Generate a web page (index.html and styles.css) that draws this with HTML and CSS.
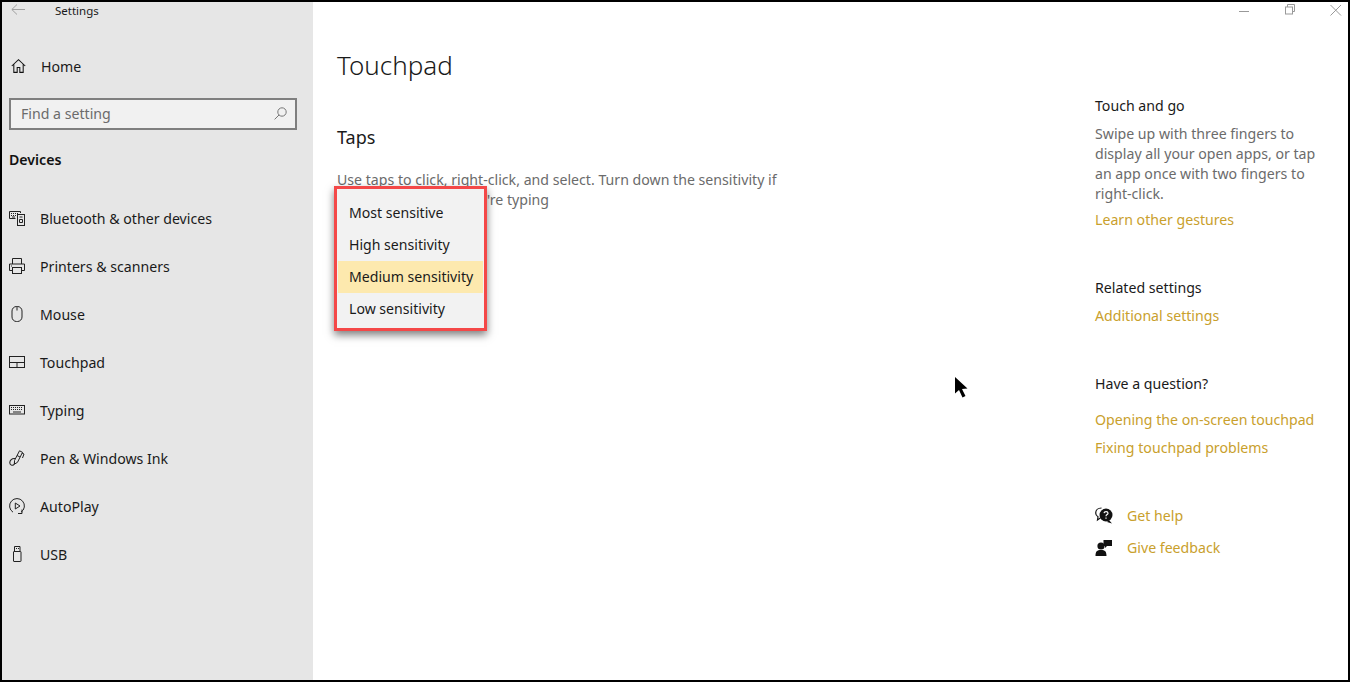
FILE: index.html
```html
<!DOCTYPE html>
<html lang="en">
<head>
    <meta charset="UTF-8">
    <title>Settings</title>
    <link rel="stylesheet" href="styles.css">
</head>
<body>
    <div class="window">
        <div class="sidebar">
            <div class="titlebar">
                <svg class="back" width="14" height="12" viewBox="0 0 14 12"><path d="M6 .5.8 5.500 6 10.500M1 5.500h13" fill="none" stroke="#a0a0a0"/></svg>
                <span>Settings</span>
            </div>
            <a class="home">
                <svg width="15" height="16" viewBox="0 0 16 16"><path d="M.8 8 8 1.200 15.200 8M3 6.200v8.600h3.600V9.600h2.800v5.200H13V6.200" fill="none" stroke="#111" stroke-width="1.100"/></svg>
                <span>Home</span>
            </a>
            <div class="search">
                <span>Find a setting</span>
                <svg width="13" height="13" viewBox="0 0 13 13"><circle cx="8" cy="5" r="4.200" fill="none" stroke="#777"/><path d="M5 8 .6 12.400" stroke="#777"/></svg>
            </div>
            <h2 class="group">Devices</h2>
            <ul class="nav">
                <li>
                    <svg width="16" height="16" viewBox="0 0 16 16" fill="none" stroke="#222"><path d="M.5 1.500h11v1.500M.5 1.500v7h6"/><path d="M2 3.500h1M4 3.500h1M6 3.500h1M8 3.500h1M2 5.500h1M4 5.500h1M6 5.500h1M3 7h3"/><rect x="8.500" y="4.500" width="7" height="11"/><path d="M10.500 7h3M10.500 9.500h3v3h-3z"/></svg>
                    <span>Bluetooth &amp; other devices</span>
                </li>
                <li>
                    <svg width="16" height="16" viewBox="0 0 16 16" fill="none" stroke="#222"><path d="M3.500 6V.5h9V6M3.500 12.500h-3V6h15v6.500h-3"/><rect x="3.500" y="9.500" width="9" height="6"/><path d="M2 8h1"/></svg>
                    <span>Printers &amp; scanners</span>
                </li>
                <li>
                    <svg width="16" height="16" viewBox="0 0 16 16" fill="none" stroke="#222"><rect x="3" y=".5" width="10" height="15" rx="4.500"/><path d="M8 .5v4"/></svg>
                    <span>Mouse</span>
                </li>
                <li>
                    <svg width="16" height="16" viewBox="0 0 16 16" fill="none" stroke="#222"><rect x=".5" y="2.500" width="15" height="11"/><path d="M.5 8.500h15M8 8.500v5"/></svg>
                    <span>Touchpad</span>
                </li>
                <li>
                    <svg width="16" height="16" viewBox="0 0 16 16" fill="none" stroke="#222"><rect x=".5" y="3.500" width="15" height="8.500"/><path d="M2 5.500h12M2 7.500h12" stroke-dasharray="1 1"/><path d="M4 10h8"/></svg>
                    <span>Typing</span>
                </li>
                <li>
                    <svg width="16" height="16" viewBox="0 0 16 16" fill="none" stroke="#222"><path d="M5.500 10.500 10.500.8l3 1.500-5 10-3 1.800zM8 5.500l3 1.500M13 3l2 1-1.500 4"/><path d="M6 8.500C3 8 .6 10.500.8 13c.2 2.600 3.500 3 4.500 1 .4-.8.2-1.500 0-2" stroke-width="1.100"/></svg>
                    <span>Pen &amp; Windows Ink</span>
                </li>
                <li>
                    <svg width="16" height="16" viewBox="0 0 16 16" fill="none" stroke="#222"><path d="M4 14.200A7.400 7.400 0 1 1 12 14.200"/><path d="M6.300 5v6l4.700-3zM13 11.500v4h-4"/></svg>
                    <span>AutoPlay</span>
                </li>
                <li>
                    <svg width="16" height="16" viewBox="0 0 16 16" fill="none" stroke="#222"><rect x="4.500" y="5.500" width="7.500" height="10" rx=".5"/><path d="M5.500 5.500V.5h5.500v5M7 2.500h1M9 2.500h1"/></svg>
                    <span>USB</span>
                </li>
            </ul>
        </div>

        <div class="main">
            <div class="controls">
                <svg width="16" height="16" viewBox="0 0 16 16"><path d="M3 9.500h10" stroke="#999"/></svg>
                <svg width="16" height="16" viewBox="0 0 16 16" fill="none" stroke="#999"><rect x="3.500" y="5" width="7" height="7"/><path d="M5.500 5V2.500h7v7H10.500"/></svg>
                <svg width="16" height="16" viewBox="0 0 16 16"><path d="M2.500 3 13 13.500M13 3 2.500 13.500" stroke="#999"/></svg>
            </div>
            <div class="columns">
                <div class="content">
                    <h1>Touchpad</h1>
                    <h2 class="section">Taps</h2>
                    <div class="taps">
                        <p>Use taps to click, right-click, and select. Turn down the sensitivity if taps happen while you're typing</p>
                        <ul class="menu">
                            <li>Most sensitive</li>
                            <li>High sensitivity</li>
                            <li class="selected">Medium sensitivity</li>
                            <li>Low sensitivity</li>
                        </ul>
                    </div>
                </div>
                <div class="aside">
                    <h3>Touch and go</h3>
                    <p>Swipe up with three fingers to display all your open apps, or tap an app once with two fingers to right-click.</p>
                    <a class="link first">Learn other gestures</a>

                    <h3 class="related">Related settings</h3>
                    <a class="link additional">Additional settings</a>

                    <h3 class="question">Have a question?</h3>
                    <a class="link opening">Opening the on-screen touchpad</a>
                    <a class="link fixing">Fixing touchpad problems</a>

                    <div class="help">
                        <svg width="18" height="17" viewBox="0 0 18 17"><path d="M6.500 1C3 1 .7 3.300.7 6c0 1.700.9 3 2.300 3.800L2.500 13 6 10.500" fill="none" stroke="#111" stroke-width="1.200"/><circle cx="11" cy="8" r="6.500" fill="#111"/><path d="M14 13l3 3.500-5-1.500z" fill="#111"/><path d="M9 6.200c.3-2 4-2 4 0 0 1.400-2 1.300-2 3" fill="none" stroke="#fff" stroke-width="1.200"/><path d="M10.400 10.500h1.200v1.300h-1.200z" fill="#fff"/></svg>
                        <a class="link">Get help</a>
                    </div>
                    <div class="help">
                        <svg width="18" height="17" viewBox="0 0 18 17" fill="#111"><circle cx="6" cy="7" r="3.600"/><path d="M.5 17c0-4.500 1.500-6 5.500-6s5.500 1.500 5.500 6zM8.500 1h8.500v6H12l-2 2V7H8.500z"/></svg>
                        <a class="link">Give feedback</a>
                    </div>
                </div>
            </div>
        </div>
    </div>

    <svg class="cursor" width="13" height="21" viewBox="0 0 13 21"><path d="M0 0v16.500l4-3.500 3.500 7.500 3-1.500L7 12l5.500-.5z" fill="#000"/></svg>
</body>
</html>
```

FILE: styles.css
```css
* {
    margin: 0;
    padding: 0;
    box-sizing: border-box;
    font-family: "Noto Sans", "Open Sans", sans-serif;
}

body {
    height: 682px;
    overflow: hidden;
    background: #fff;
    position: relative;
}

.window {
    display: flex;
    height: 682px;
    border: 2px solid #000;
}

/* left column */
.sidebar {
    width: 311px;
    flex-shrink: 0;
    background: #e6e6e6;
    color: #1a1a1a;
    font-size: 14.15px;
}

.titlebar {
    display: flex;
    align-items: center;
    height: 16px;
    padding-left: 9px;
    font-size: 11.5px;
}

.titlebar span {
    margin-left: 30px;
}

.home {
    display: flex;
    align-items: center;
    gap: 15px;
    height: 48px;
    margin-top: 24px;
    padding-left: 9px;
}

.search {
    display: flex;
    align-items: center;
    justify-content: space-between;
    width: 288px;
    height: 32px;
    margin: 8px 0 0 7px;
    padding: 0 8px 2px 10px;
    background: #f1f1f1;
    border: 2px solid #7f7f7f;
    color: #6b6b6b;
}

.group {
    margin: 20px 0 0 7px;
    height: 20px;
    line-height: 20px;
    font-size: 14.15px;
    font-weight: 600;
    color: #111;
}

.nav {
    list-style: none;
    margin-top: 24px;
}

.nav li {
    display: flex;
    align-items: center;
    gap: 15px;
    height: 48px;
    padding-left: 7px;
}

/* page */
.main {
    flex: 1;
    min-width: 0;
}

.controls {
    display: flex;
    justify-content: flex-end;
    gap: 30px;
    height: 18px;
    padding-right: 4px;
}

.columns {
    display: flex;
}

.content {
    width: 782px;
    padding-left: 24px;
}

.content h1 {
    margin-top: 25px;
    height: 40px;
    line-height: 40px;
    font-size: 26px;
    font-weight: 300;
    color: #1a1a1a;
}

.section {
    margin-top: 38px;
    height: 28px;
    line-height: 28px;
    font-size: 18px;
    font-weight: 400;
    color: #1a1a1a;
}

.taps {
    position: relative;
    margin-top: 19px;
    width: 450px;
}

.taps p {
    font-size: 14.15px;
    line-height: 20px;
    color: #6b6b6b;
}

/* sensitivity dropdown, opened over the text */
.menu {
    position: absolute;
    top: 16px;
    left: -3px;
    width: 153px;
    height: 145px;
    padding: 8px 1px 0;
    list-style: none;
    background: #f2f2f2;
    border: 3px solid #f44848;
    box-shadow: 0 4px 8px rgba(0, 0, 0, 0.5);
    font-size: 14.1px;
    color: #1a1a1a;
}

.menu li {
    height: 32px;
    line-height: 32px;
    padding-left: 11px;
}

.menu .selected {
    background: #fde9ae;
}

.aside {
    width: 240px;
    font-size: 14.15px;
}

.aside h3 {
    margin-top: 76px;
    height: 20px;
    line-height: 20px;
    font-size: 14.15px;
    font-weight: 400;
    color: #1a1a1a;
}

.aside p {
    margin-top: 8px;
    width: 226px;
    line-height: 20px;
    color: #6b6b6b;
}

.link {
    color: #c9a02c;
}

.aside > .link {
    display: block;
    height: 20px;
    line-height: 20px;
}

.aside > .first {
    margin-top: 6px;
}

.aside > .additional {
    margin-top: 8px;
}

.aside .related {
    margin-top: 48px;
}

.aside .question {
    margin-top: 48px;
}

.aside > .opening {
    margin-top: 16px;
}

.aside > .fixing {
    margin-top: 8px;
}

.help {
    display: flex;
    align-items: center;
    gap: 14px;
    height: 20px;
    margin-top: 12px;
}

.fixing + .help {
    margin-top: 47px;
}

/* mouse pointer caught in the screenshot */
.cursor {
    position: absolute;
    left: 955px;
    top: 377px;
}
```
